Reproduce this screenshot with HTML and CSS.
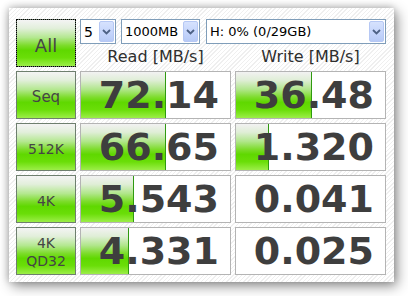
FILE: index.html
```html
<!DOCTYPE html>
<html>
<head>
<meta charset="utf-8">
<link rel="stylesheet" href="styles.css">
</head>
<body>
<div class="window">
  <div class="grid">
    <div class="btn btn-all"><span class="lbl-big">All</span></div>
    <div class="top">
      <div class="combos">
        <div class="combo c-count"><span>5</span><i class="arrow"><svg width="9" height="6" viewBox="0 0 9 6"><path d="M1 1 L4.5 4.5 L8 1" fill="none" stroke="#4d6185" stroke-width="1.8"/></svg></i></div>
        <div class="combo c-size"><span>1000MB</span><i class="arrow"><svg width="9" height="6" viewBox="0 0 9 6"><path d="M1 1 L4.5 4.5 L8 1" fill="none" stroke="#4d6185" stroke-width="1.8"/></svg></i></div>
        <div class="combo c-drive"><span>H: 0% (0/29GB)</span><i class="arrow"><svg width="9" height="6" viewBox="0 0 9 6"><path d="M1 1 L4.5 4.5 L8 1" fill="none" stroke="#4d6185" stroke-width="1.8"/></svg></i></div>
      </div>
      <div class="heads">
        <div class="head">Read [MB/s]</div>
        <div class="head">Write [MB/s]</div>
      </div>
    </div>

    <div class="btn"><span class="lbl-big small">Seq</span></div>
    <div class="res"><div class="bar" style="width:85px"></div><span class="num">72.14</span></div>
    <div class="res"><div class="bar" style="width:76px"></div><span class="num">36.48</span></div>

    <div class="btn"><span class="lbl">512K</span></div>
    <div class="res"><div class="bar" style="width:85px"></div><span class="num">66.65</span></div>
    <div class="res"><div class="bar" style="width:33px"></div><span class="num">1.320</span></div>

    <div class="btn"><span class="lbl">4K</span></div>
    <div class="res"><div class="bar" style="width:53px"></div><span class="num">5.543</span></div>
    <div class="res"><span class="num">0.041</span></div>

    <div class="btn"><span class="lbl two">4K<br>QD32</span></div>
    <div class="res"><div class="bar" style="width:48px"></div><span class="num">4.331</span></div>
    <div class="res"><span class="num">0.025</span></div>
  </div>
</div>
</body>
</html>
```

FILE: styles.css
```css
html, body {
  margin: 0;
  padding: 0;
  background: #ffffff;
}
body {
  width: 408px;
  height: 296px;
  overflow: hidden;
  font-family: "DejaVu Sans", Verdana, sans-serif;
}
.window {
  box-sizing: border-box;
  margin: 8px 0 0 9px;
  width: 385px;
  height: 274px;
  padding: 11px 8px 7px 7px;
  background-color: #ffffff;
  background-image: repeating-linear-gradient(135deg, #ffffff 0px, #ffffff 2px, #efefef 2px, #efefef 3px);
  box-shadow: 3px 4px 12px rgba(0, 0, 0, 0.45), -1px -1px 7px rgba(0, 0, 0, 0.2);
}
.grid {
  display: grid;
  grid-template-columns: 60px 151px 151px;
  grid-template-rows: 48px 48px 48px 48px 48px;
  gap: 4px;
}
.btn {
  box-sizing: border-box;
  border: 1px solid #6e7f6e;
  background: linear-gradient(to bottom, #f4f4f4 0%, #e2efdb 18%, #b4e890 38%, #7ddc2c 55%, #5fd800 66%, #6ade08 82%, #9cee48 100%);
  display: flex;
  align-items: center;
  justify-content: center;
  color: #454545;
  text-align: center;
}
.btn-all {
  outline: 1px dotted #000000;
  outline-offset: -1px;
}
.lbl-big {
  font-size: 18px;
  padding-top: 4px;
}
.lbl-big.small {
  font-size: 15px;
}
.lbl {
  font-size: 14px;
  padding-top: 3px;
}
.lbl.two {
  line-height: 18px;
  padding-top: 1px;
}
.top {
  grid-column: 2 / 4;
  display: flex;
  flex-direction: column;
}
.combos {
  display: flex;
  height: 25px;
}
.combo {
  box-sizing: border-box;
  height: 25px;
  border: 1px solid #7f9db9;
  background: #ffffff;
  display: flex;
  align-items: center;
  justify-content: space-between;
  padding: 0 1px 0 3px;
  font-size: 13px;
  color: #000000;
}
.c-count { width: 36px; font-size: 14px; }
.c-size { width: 79px; margin-left: 5px; }
.c-drive { width: 180px; margin-left: 6px; }
.arrow {
  box-sizing: border-box;
  width: 15px;
  height: 21px;
  border: 1px solid #b6c8f4;
  border-radius: 2px;
  background: linear-gradient(to bottom, #d6e2fd 0%, #c4d4fb 60%, #b7caf6 100%);
  display: flex;
  align-items: center;
  justify-content: center;
}
.heads {
  display: grid;
  grid-template-columns: 151px 151px;
  gap: 4px;
  padding-top: 3px;
}
.head {
  text-align: center;
  font-size: 16px;
  line-height: 19px;
  color: #2e2e2e;
}
.res {
  position: relative;
  box-sizing: border-box;
  border: 1px solid #b4b4b4;
  background: #ffffff;
  display: flex;
  align-items: center;
  justify-content: flex-end;
  padding-right: 11px;
  overflow: hidden;
}
.bar {
  position: absolute;
  left: 0;
  top: 0;
  bottom: 0;
  box-sizing: border-box;
  border-right: 1px solid #2f9a10;
  background: linear-gradient(to bottom, #f2f2f2 0%, #dfeed6 18%, #b0e68a 38%, #7ddc2c 55%, #5fd800 66%, #6ade08 82%, #9cee48 100%);
}
.num {
  position: relative;
  font-weight: bold;
  font-size: 38px;
  line-height: 46px;
  color: #3e3e3e;
}
```
